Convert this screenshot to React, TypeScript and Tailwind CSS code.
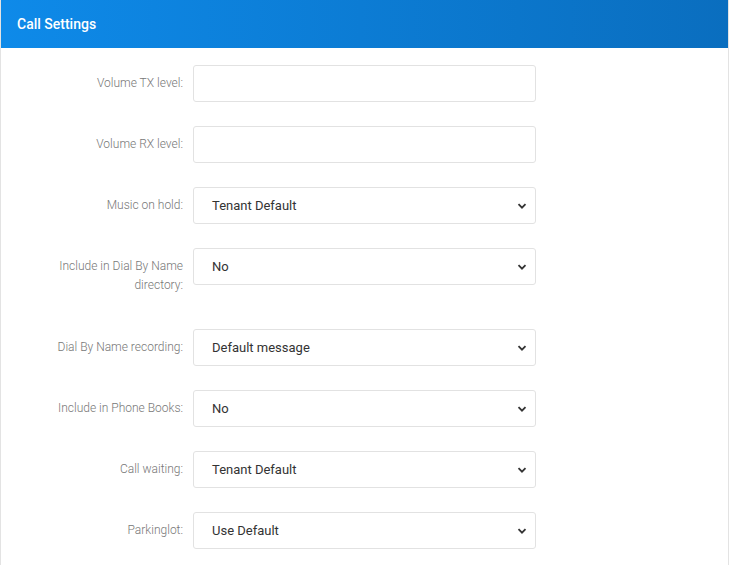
const rows: { label: string[]; value?: string; tall?: boolean }[] = [
  { label: ["Volume TX level:"] },
  { label: ["Volume RX level:"] },
  { label: ["Music on hold:"], value: "Tenant Default" },
  { label: ["Include in Dial By Name", "directory:"], value: "No", tall: true },
  { label: ["Dial By Name recording:"], value: "Default message" },
  { label: ["Include in Phone Books:"], value: "No" },
  { label: ["Call waiting:"], value: "Tenant Default" },
  { label: ["Parkinglot:"], value: "Use Default" },
];

function Chevron() {
  return (
    <svg className="absolute right-[8px] top-1/2 -translate-y-1/2 w-[10px] h-[10px] pointer-events-none" viewBox="0 0 10 10">
      <path d="M1.5 3.2 L5 6.7 L8.5 3.2" fill="none" stroke="#333" strokeWidth={1.8} />
    </svg>
  );
}

export default function App() {
  return (
    <div className="w-[730px] h-[565px] overflow-hidden bg-white" style={{ fontFamily: "Roboto, 'Liberation Sans', sans-serif" }}>
      <div className="w-[729px] h-full border-x border-[#e3e3e3]">
        <div className="h-[48px] flex items-center px-[16px] bg-gradient-to-r from-[#0e8ae9] to-[#0a6ebf] text-white text-[14px] font-medium">
          Call Settings
        </div>
        <div className="pt-[17px]">
          {rows.map((r, i) => (
            <div key={i} className={`flex mb-[24px] ${r.tall ? "min-h-[57px]" : ""}`}>
              <div className="w-[192px] pr-[10px] pt-[9px] text-right text-[12px] leading-[19px] text-[#777] font-light">
                {r.label.map((l, j) => <div key={j}>{l}</div>)}
              </div>
              <div className="relative w-[343px] h-[37px] border border-[#e2e2e2] rounded-[3px] flex items-center pl-[18px] text-[13px] text-[#333]">
                {r.value}
                {r.value && <Chevron />}
              </div>
            </div>
          ))}
        </div>
      </div>
    </div>
  );
}
